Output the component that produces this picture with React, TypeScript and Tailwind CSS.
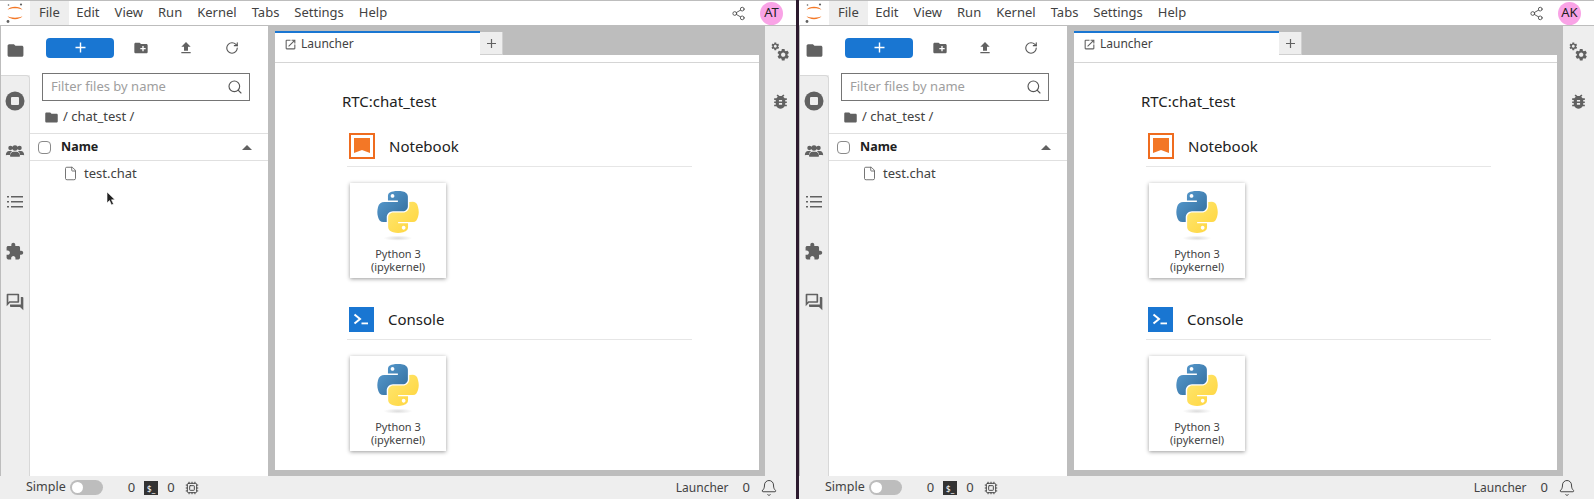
import { Bell, Cpu, File, RotateCw, Search, Share2 } from "lucide-react";

const font = "font-['Noto_Sans',sans-serif]";

const FOLDER = "M10 4H4c-1.1 0-1.99.9-1.99 2L2 18c0 1.1.9 2 2 2h16c1.1 0 2-.9 2-2V8c0-1.1-.9-2-2-2h-8l-2-2z";
const NEW_FOLDER = "M20 6h-8l-2-2H4c-1.11 0-1.99.89-1.99 2L2 18c0 1.11.89 2 2 2h16c1.11 0 2-.89 2-2V8c0-1.11-.89-2-2-2zm-1 8h-3v3h-2v-3h-3v-2h3V9h2v3h3v2z";
const UPLOAD = "M9 16h6v-6h4l-7-7-7 7h4zm-4 2h14v2H5z";
const EXTENSION = "M20.5 11H19V7c0-1.1-.9-2-2-2h-4V3.5C13 2.12 11.88 1 10.5 1S8 2.12 8 3.5V5H4c-1.1 0-1.99.9-1.99 2v3.8H3.5c1.49 0 2.7 1.21 2.7 2.7s-1.21 2.7-2.7 2.7H2V20c0 1.1.9 2 2 2h3.8v-1.5c0-1.49 1.21-2.7 2.7-2.7 1.49 0 2.7 1.21 2.7 2.7V22H17c1.1 0 2-.9 2-2v-4h1.5c1.38 0 2.5-1.12 2.5-2.5S21.88 11 20.5 11z";
const FORUM = "M15 4v7H5.17L4 12.17V4h11m1-2H3c-.55 0-1 .45-1 1v14l4-4h10c.55 0 1-.45 1-1V3c0-.55-.45-1-1-1zm5 4h-2v9H6v2c0 .55.45 1 1 1h11l4 4V7c0-.55-.45-1-1-1z";
const BUG = "M20 8h-2.81c-.45-.78-1.07-1.45-1.82-1.96L17 4.41 15.59 3l-2.17 2.17C12.96 5.06 12.49 5 12 5c-.49 0-.96.06-1.41.17L8.41 3 7 4.41l1.62 1.63C7.88 6.55 7.26 7.22 6.81 8H4v2h2.09c-.05.33-.09.66-.09 1v1H4v2h2v1c0 .34.04.67.09 1H4v2h2.81c1.04 1.79 2.97 3 5.19 3s4.15-1.21 5.19-3H20v-2h-2.09c.05-.33.09-.66.09-1v-1h2v-2h-2v-1c0-.34-.04-.67-.09-1H20V8zm-6 8h-4v-2h4v2zm0-4h-4v-2h4v2z";
const GEAR = "M19.14 12.94c.04-.3.06-.61.06-.94 0-.32-.02-.64-.07-.94l2.03-1.58c.18-.14.23-.41.12-.61l-1.92-3.32c-.12-.22-.37-.29-.59-.22l-2.39.96c-.5-.38-1.03-.7-1.62-.94l-.36-2.54c-.04-.24-.24-.41-.48-.41h-3.84c-.24 0-.43.17-.47.41l-.36 2.54c-.59.24-1.13.57-1.62.94l-2.39-.96c-.22-.08-.47 0-.59.22L2.74 8.87c-.12.21-.08.47.12.61l2.03 1.58c-.05.3-.09.63-.09.94s.02.64.07.94l-2.03 1.58c-.18.14-.23.41-.12.61l1.92 3.32c.12.22.37.29.59.22l2.39-.96c.5.38 1.03.7 1.62.94l.36 2.54c.05.24.24.41.48.41h3.84c.24 0 .44-.17.47-.41l.36-2.54c.59-.24 1.13-.56 1.62-.94l2.39.96c.22.08.47 0 .59-.22l1.92-3.32c.12-.22.07-.47-.12-.61l-2.01-1.58zM12 15.6c-1.98 0-3.6-1.62-3.6-3.6s1.62-3.6 3.6-3.6 3.6 1.62 3.6 3.6-1.62 3.6-3.6 3.6z";
const LAUNCH = "M19 19H5V5h7V3H5a2 2 0 0 0-2 2v14a2 2 0 0 0 2 2h14c1.1 0 2-.9 2-2v-7h-2v7zM14 3v2h3.59l-9.83 9.83 1.41 1.41L19 6.41V10h2V3h-7z";
const USERS = "M6.5 11a2.6 2.6 0 1 0 0-5.2 2.6 2.6 0 0 0 0 5.2zm11 0a2.6 2.6 0 1 0 0-5.2 2.6 2.6 0 0 0 0 5.2zM12 11.6a3.3 3.3 0 1 0 0-6.6 3.3 3.3 0 0 0 0 6.6zM1 17c0-2.6 1.6-5 3.8-5h2.4c.5 0 .9.1 1.2.3C6.900 13.200 6 15 6 16.900H1.900C1.400 17.300 1 17.300 1 17zm5.900 2c-.6 0-.9-.4-.9-.9 0-2.700 2-5.100 4.300-5.100h3.400c2.300 0 4.300 2.400 4.300 5.100 0 .5-.3.9-.9.9H6.900zM23 17c0 .3-.4.3-.9-.1H18c0-1.900-.9-3.700-2.400-4.600.3-.2.7-.3 1.200-.3h2.400c2.200 0 3.800 2.400 3.800 5z";
const BLUE = "M54.9 0c-4.6 0-9 .4-12.800 1.100C30.800 3.100 28.800 7.300 28.800 15v10.200h26.100v3.400H19c-7.600 0-14.200 4.600-16.300 13.200-2.400 10-2.500 16.200 0 26.600 1.900 7.800 6.300 13.300 13.900 13.300h9v-12c0-8.700 7.500-16.300 16.400-16.300h26.100c7.300 0 13.100-6 13.100-13.300V15c0-7.100-6-12.400-13.100-13.600C63.500.4 58.900 0 54.900 0zM40.800 8.100c2.700 0 4.900 2.200 4.900 5s-2.200 4.900-4.900 4.900-4.900-2.200-4.900-4.900 2.200-5 4.900-5z";
const YELLOW = "M84.800 28.600v11.600c0 9-7.600 16.600-16.400 16.600H42.400c-7.200 0-13.100 6.100-13.100 13.300v24.900c0 7.100 6.200 11.300 13.100 13.300 8.300 2.400 16.200 2.900 26.100 0 6.600-1.900 13.100-5.800 13.100-13.300v-10H55.500v-3.300h39.200c7.600 0 10.400-5.300 13.100-13.300 2.700-8.200 2.600-16.100 0-26.600-1.900-7.600-5.500-13.300-13.100-13.300zM70.100 91.700c2.700 0 4.900 2.200 4.900 4.900s-2.200 5-4.900 5-4.900-2.200-4.900-5 2.200-4.900 4.900-4.900z";

function Mi({ d, size = 18, className = "" }: { d: string; size?: number; className?: string }) {
  return (
    <svg width={size} height={size} viewBox="0 0 24 24" className={className} fill="currentColor">
      <path d={d} />
    </svg>
  );
}

function JupyterLogo() {
  return (
    <svg width="20" height="24" viewBox="0 0 20 24">
      <path d="M2.500 9C5 4.800 15 4.800 17.500 9 15 6.800 5 6.800 2.500 9z" fill="#f37726" />
      <path d="M2.500 15C5 19.200 15 19.200 17.500 15 15 17.200 5 17.200 2.500 15z" fill="#f37726" />
      <circle cx="16" cy="3.500" r="1.100" fill="#616161" />
      <circle cx="3" cy="20.500" r="1.400" fill="#616161" />
      <circle cx="3.500" cy="4" r="0.800" fill="#616161" />
    </svg>
  );
}

function PythonLogo() {
  return (
    <svg width="42" height="54" viewBox="0 0 110.400 142">
      <defs>
        <linearGradient id="pyBlue" x1="0" y1="0" x2="1" y2="1">
          <stop offset="0" stopColor="#5a9fd4" />
          <stop offset="1" stopColor="#306998" />
        </linearGradient>
        <linearGradient id="pyYellow" x1="0" y1="0" x2="1" y2="1">
          <stop offset="0" stopColor="#ffe873" />
          <stop offset="1" stopColor="#ffd43b" />
        </linearGradient>
        <radialGradient id="pyShadow">
          <stop offset="0" stopColor="#b8b8b8" stopOpacity="0.5" />
          <stop offset="1" stopColor="#b8b8b8" stopOpacity="0" />
        </radialGradient>
      </defs>
      <path d={BLUE} fill="url(#pyBlue)" />
      <path d={YELLOW} fill="url(#pyYellow)" />
      <ellipse cx="55" cy="124" rx="38" ry="7" fill="url(#pyShadow)" />
    </svg>
  );
}

function NotebookIcon() {
  return (
    <svg width="26" height="26" viewBox="0 0 26 26">
      <rect x="1" y="1" width="24" height="24" fill="none" stroke="#ef6c1f" strokeWidth="2" />
      <path d="M5 5h16v15l-8-3-8 3z" fill="#f37726" />
    </svg>
  );
}

function ConsoleIcon() {
  return (
    <svg width="25" height="25" viewBox="0 0 25 25">
      <rect width="25" height="25" fill="#1976d2" />
      <path d="M5.500 7.500l5.500 4.500-5.500 4.500" fill="none" stroke="#fff" strokeWidth="2" />
      <rect x="12.500" y="15.500" width="6.500" height="1.800" fill="#fff" />
    </svg>
  );
}

function KernelCard() {
  return (
    <div className="flex h-[95px] w-[96px] flex-col items-center bg-white pt-[8px] shadow-[0_1px_4px_rgba(0,0,0,0.4)]">
      <PythonLogo />
      <div className="mt-[2px] text-center text-[11px] leading-[13px] text-[#424242]">
        Python 3
        <br />
        (ipykernel)
      </div>
    </div>
  );
}

function LauncherSection({ title, icon }: { title: string; icon: React.ReactNode }) {
  return (
    <div className="flex flex-col">
      <div className="flex h-[34px] w-[345px] items-center gap-[14px] border-b border-[#e6e6e6] pb-[7px] pl-[2px]">
        {icon}
        <span className="text-[15px] text-[#212121]">{title}</span>
      </div>
      <div className="pl-[3px] pt-[16px]">
        <KernelCard />
      </div>
    </div>
  );
}

function SideTab({ children, active, first }: { children: React.ReactNode; active?: boolean; first?: boolean }) {
  return (
    <div
      className={
        active
          ? "flex h-[49px] items-center justify-center bg-white pr-[1px] text-[#616161]"
          : first
            ? "flex h-[51px] items-center justify-center rounded-tr-sm border-t border-r border-[#d8d8d8] text-[#616161]"
            : "flex h-[50px] items-center justify-center border-r border-[#d8d8d8] text-[#616161]"
      }
    >
      {children}
    </div>
  );
}

function Pane({ initials, showCursor, width }: { initials: string; showCursor?: boolean; width: string }) {
  const menus = ["Edit", "View", "Run", "Kernel", "Tabs", "Settings", "Help"];
  return (
    <div className={`relative flex h-full flex-col ${width}`}>
      {/* top menu */}
      <div className="flex h-[26px] shrink-0 items-stretch border-t border-b border-[#bdbdbd] bg-white text-[13px] text-[#424242]">
        <div className="flex w-[30px] items-center justify-center">
          <JupyterLogo />
        </div>
        <div className="flex items-center bg-[#eeeeee] px-[9px]">File</div>
        {menus.map((m) => (
          <div key={m} className="flex items-center px-[7.5px]">
            {m}
          </div>
        ))}
        <div className="ml-auto flex items-center gap-[14px] pr-[13px]">
          <Share2 size={15} strokeWidth={1.5} className="text-[#555555]" />
          <div className="flex h-[23px] w-[23px] items-center justify-center rounded-full bg-[#f9a3e6] text-[13px] text-[#212121]">
            {initials}
          </div>
        </div>
      </div>

      <div className="flex min-h-0 flex-1">
        {/* left tabs */}
        <div className="flex w-[30px] shrink-0 flex-col border-l border-[#bdbdbd] bg-[#eeeeee]">
          <SideTab active>
            <Mi d={FOLDER} size={19} />
          </SideTab>
          <SideTab first>
            <svg width="20" height="20" viewBox="0 0 20 20" className="mr-[1px]">
              <circle cx="10" cy="10" r="9.500" fill="#616161" />
              <rect x="6" y="6" width="8" height="8" rx="1" fill="#eeeeee" />
            </svg>
          </SideTab>
          <SideTab>
            <Mi d={USERS} size={20} className="mr-[1px]" />
          </SideTab>
          <SideTab>
            <svg width="18" height="18" viewBox="0 0 18 18" fill="#616161" className="mr-[1px] mt-[2px]">
              <rect x="1" y="3" width="2" height="1.500" />
              <rect x="5" y="3" width="12" height="1.500" />
              <rect x="1" y="8" width="2" height="1.500" />
              <rect x="5" y="8" width="12" height="1.500" />
              <rect x="1" y="13" width="2" height="1.500" />
              <rect x="5" y="13" width="12" height="1.500" />
            </svg>
          </SideTab>
          <SideTab>
            <Mi d={EXTENSION} size={19} className="mr-[1px]" />
          </SideTab>
          <SideTab>
            <Mi d={FORUM} size={20} className="mr-[1px] mt-[2px]" />
          </SideTab>
          <div className="flex-1 border-r border-[#d8d8d8]" />
        </div>

        {/* file browser */}
        <div className="flex w-[238px] shrink-0 flex-col bg-white text-[#424242]">
          <div className="flex h-[42px] shrink-0 items-center pl-[16px] pt-[1px]">
            <div className="flex h-[20px] w-[68px] items-center justify-center rounded-sm bg-[#1976d2] text-white">
              <svg width="11" height="11" viewBox="0 0 11 11">
                <path d="M5.500 0.500v10M0.500 5.500h10" stroke="#fff" strokeWidth="1.400" />
              </svg>
            </div>
            <Mi d={NEW_FOLDER} size={16} className="ml-[19px] text-[#616161]" />
            <Mi d={UPLOAD} size={16} className="ml-[29px] text-[#616161]" />
            <RotateCw size={14} strokeWidth={1.9} className="ml-[31px] text-[#555555]" />
          </div>
          <div className="px-[12px] pt-[5px]">
            <div className="flex h-[28px] w-[208px] items-center justify-between border border-[#757575] pl-[8px] pr-[6px] text-[13px] text-[#9e9e9e]">
              <span>Filter files by name</span>
              <Search size={16} strokeWidth={1.7} className="text-[#555555]" />
            </div>
          </div>
          <div className="flex h-[32px] shrink-0 items-center gap-[4px] pl-[14px] text-[13px]">
            <Mi d={FOLDER} size={15} className="text-[#616161]" />
            <span>/ chat_test /</span>
          </div>
          <div className="flex h-[28px] shrink-0 items-center border-y border-[#e0e0e0] pl-[8px] pr-[16px] text-[12.500px] font-bold text-[#212121]">
            <div className="h-[13px] w-[13px] rounded-sm border border-[#8a8a8a] bg-white" />
            <span className="ml-[10px]">Name</span>
            <svg width="10" height="5" viewBox="0 0 10 5" className="ml-auto">
              <path d="M0 5l5-5 5 5z" fill="#616161" />
            </svg>
          </div>
          <div className="flex h-[25px] shrink-0 items-center gap-[6px] pl-[33px] text-[13px]">
            <File size={15} strokeWidth={1.4} className="text-[#616161]" />
            <span>test.chat</span>
          </div>
        </div>

        {/* main dock */}
        <div className="flex min-w-0 flex-1 flex-col bg-[#bdbdbd] pb-[6px] pl-[7px] pr-[6px]">
          <div className="flex h-[29px] shrink-0 items-end">
            <div className="flex h-[24px] w-[205px] items-center gap-[4px] border-t-2 border-[#1976d2] bg-white pl-[9px] text-[12px] text-[#424242]">
              <Mi d={LAUNCH} size={13} className="text-[#616161]" />
              <span>Launcher</span>
            </div>
            <div className="flex h-[23px] w-[23px] items-center justify-center border-r border-b border-[#d0d0d0] bg-[#eeeeee]">
              <svg width="11" height="11" viewBox="0 0 11 11">
                <path d="M5.500 1v9M1 5.500h9" stroke="#616161" strokeWidth="1.200" />
              </svg>
            </div>
          </div>
          <div className="h-[8px] shrink-0 border-b border-[#d5d5d5] bg-white" />
          <div className="min-h-0 flex-1 bg-white pl-[67px] pt-[27px] font-normal">
            <div className="text-[15px] leading-[22px] text-[#212121]">RTC:chat_test</div>
            <div className="ml-[5px] mt-[21px] flex flex-col gap-[28px]">
              <LauncherSection title="Notebook" icon={<NotebookIcon />} />
              <LauncherSection title="Console" icon={<ConsoleIcon />} />
            </div>
          </div>
        </div>

        {/* right tabs */}
        <div className="flex w-[31px] shrink-0 flex-col items-center bg-[#eeeeee] pt-[1px] text-[#616161]">
          <div className="flex h-[49px] items-center justify-center">
            <svg width="20" height="20" viewBox="0 0 20 20" fill="currentColor">
              <path d={GEAR} transform="translate(-0.500 -0.500) scale(0.400)" />
              <path d={GEAR} transform="translate(5 5.500) scale(0.600)" />
            </svg>
          </div>
          <div className="flex h-[50px] items-center justify-center">
            <Mi d={BUG} size={19} />
          </div>
        </div>
      </div>

      {/* status bar */}
      <div className="flex h-[23px] shrink-0 items-center bg-[#eeeeee] pl-[26px] pr-[18px] text-[13px] text-[#424242]">
        <span className="text-[12.500px]">Simple</span>
        <div className="ml-[4px] flex h-[15px] w-[33px] items-center rounded-full bg-[#bdbdbd] pl-[2px]">
          <div className="h-[11px] w-[11px] rounded-full bg-white" />
        </div>
        <span className="ml-[25px]">0</span>
        <div className="ml-[9px] flex h-[14px] w-[14px] items-end justify-center bg-[#333333] pb-[1px] text-[8px] leading-[10px] text-white">
          $_
        </div>
        <span className="ml-[9px]">0</span>
        <Cpu size={14} strokeWidth={1.6} className="ml-[10px] text-[#424242]" />
        <span className="ml-auto text-[12px]">Launcher</span>
        <span className="ml-[14px]">0</span>
        <Bell size={18} strokeWidth={1.3} className="ml-[10px] text-[#424242]" />
      </div>

      {showCursor && (
        <svg width="11" height="15" viewBox="0 0 11 15" className="absolute left-[106px] top-[191px]">
          <path d="M1 1v11l2.500-2.500L5.500 14l2-1-2-4.200H9z" fill="#222" stroke="#fff" strokeWidth="0.600" />
        </svg>
      )}
    </div>
  );
}

export default function App() {
  return (
    <div className={`flex h-[499px] w-[1594px] overflow-hidden bg-white ${font}`}>
      <Pane initials="AT" showCursor width="w-[796px]" />
      <div className="w-[3px] shrink-0 bg-[#2c1a2e]" />
      <Pane initials="AK" width="w-[795px]" />
    </div>
  );
}
